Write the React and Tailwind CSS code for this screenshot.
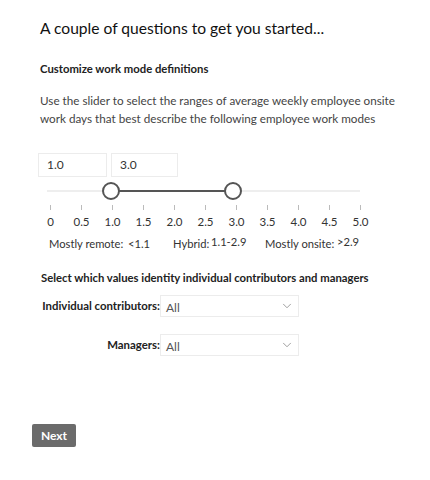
import React from "react";
import { ChevronDown } from "lucide-react";

const ticks = ["0", "0.5", "1.0", "1.5", "2.0", "2.5", "3.0", "3.5", "4.0", "4.5", "5.0"];

function Select({ value }) {
  return (
    <div className="flex h-[22px] w-[139px] items-center justify-between border border-[#ececec] bg-white pl-[5px] pr-[4px] text-[12px] text-[#555]">
      <span className="mt-[3px]">{value}</span>
      <ChevronDown className="h-[14px] w-[14px] text-[#777]" strokeWidth={1.2} />
    </div>
  );
}

export default function App() {
  return (
    <div className="min-h-[480px] bg-white pl-[40px] pt-[18px] text-[#222]" style={{ fontFamily: 'Lato, "Segoe UI", sans-serif' }}>
      <h1 className="text-[15.6px] leading-[20px] text-[#111]">A couple of questions to get you started...</h1>

      <h2 className="mt-[23px] text-[11.3px] font-bold leading-[16px] text-[#222]">Customize work mode definitions</h2>

      <p className="mt-[14px] whitespace-nowrap text-[11.7px] leading-[18px] text-[#444]">
        Use the slider to select the ranges of average weekly employee onsite
        <br />
        work days that best describe the following employee work modes
      </p>

      <div className="ml-[-2px] mt-[26px] flex gap-[4px]">
        <div className="flex h-[24px] w-[69px] items-center border border-[#ececec] px-[8px] text-[12px] text-[#333]">1.0</div>
        <div className="flex h-[24px] w-[67px] items-center border border-[#ececec] px-[8px] text-[12px] text-[#333]">3.0</div>
      </div>

      <div className="relative ml-[7px] mt-[5px] h-[18px] w-[313px]">
        <div className="absolute left-0 right-0 top-[8px] h-[2px] bg-[#eeeeee]" />
        <div className="absolute left-[20.4%] right-[40.6%] top-[8px] h-[2px] bg-[#555]" />
        <div className="absolute left-[20.4%] top-0 h-[18px] w-[18px] -translate-x-1/2 rounded-full border-2 border-[#555] bg-white" />
        <div className="absolute left-[59.4%] top-0 h-[18px] w-[18px] -translate-x-1/2 rounded-full border-2 border-[#555] bg-white" />
      </div>

      <div className="ml-[-5px] mt-[5px] flex w-[341px]">
        {ticks.map((t) => (
          <div key={t} className="flex w-[31px] flex-col items-center">
            <div className="h-[5px] w-px bg-[#bbb]" />
            <div className="mt-[4px] text-[11.5px] leading-[16px] text-[#333]">{t}</div>
          </div>
        ))}
      </div>

      <div className="ml-[9px] mt-[6px] flex whitespace-nowrap text-[11.2px] leading-[16px] text-[#333]">
        <span className="w-[79px] shrink-0">Mostly remote:</span>
        <span className="w-[45px] shrink-0">&lt;1.1</span>
        <span className="w-[38px] shrink-0">Hybrid:</span>
        <span className="-mt-[2px] w-[54px] shrink-0">1.1-2.9</span>
        <span className="w-[72px] shrink-0">Mostly onsite:</span>
        <span className="-mt-[2px] shrink-0">&gt;2.9</span>
      </div>

      <h3 className="mt-[18px] pl-[1px] whitespace-nowrap text-[11.3px] font-bold leading-[16px] text-[#222]">
        Select which values identity individual contributors and managers
      </h3>

      <div className="mt-[9px] flex flex-col gap-[17px] pl-[1px]">
        <div className="flex items-center">
          <div className="w-[119px] whitespace-nowrap text-right text-[11.4px] font-bold text-[#222]">Individual contributors:</div>
          <Select value="All" />
        </div>
        <div className="flex items-center">
          <div className="w-[119px] whitespace-nowrap text-right text-[11.4px] font-bold text-[#222]">Managers:</div>
          <Select value="All" />
        </div>
      </div>

      <button className="ml-[-8px] mt-[68px] h-[23px] w-[44px] rounded-[2px] bg-[#6b6b6b] text-[12px] font-bold text-white">
        Next
      </button>
    </div>
  );
}
